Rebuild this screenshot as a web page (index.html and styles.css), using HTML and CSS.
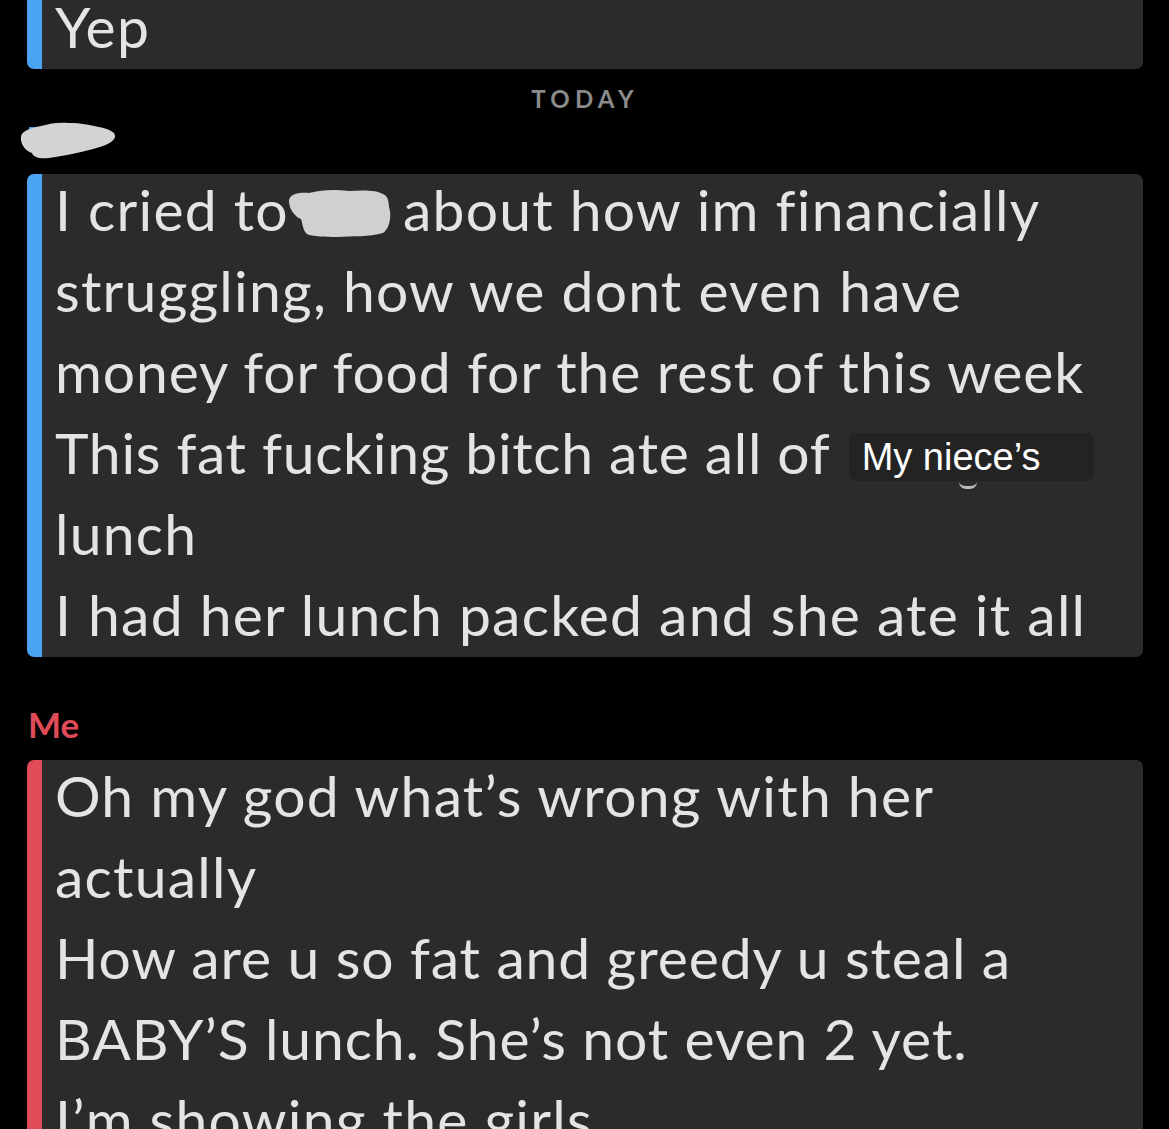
FILE: index.html
```html
<!DOCTYPE html>
<html lang="en">
<head>
  <meta charset="UTF-8">
  <meta name="viewport" content="width=device-width, initial-scale=1.0">
  <title>Chat</title>
  <link rel="stylesheet" href="styles.css">
</head>
<body>
  <div class="chat">
    <div class="bubble them first">
      <p class="msg">Yep</p>
    </div>

    <div class="day">TODAY</div>

    <div class="sender">
      <span class="sender-mark"></span>
      <svg class="blob name-blob" viewBox="0 0 100 38" aria-hidden="true">
        <path d="M4 16 C4 10 14 7 24 5 C34 2 42 1 52 2 C64 2 72 4 82 6 C92 8 99 11 98 16 C97 21 88 25 76 28 C62 32 46 35 32 37 C22 38 16 36 15 32 C8 30 3 22 4 16 Z" fill="#d3d3d3"/>
      </svg>
    </div>

    <div class="bubble them">
      <p class="msg">I cried to<svg class="blob word-blob" viewBox="0 0 104 48" aria-hidden="true"><path d="M2 12 C2 5 12 3 22 4 C34 1 48 0 62 2 C76 1 90 1 96 5 C103 8 101 16 103 22 C104 30 102 40 96 44 C82 48 66 47 50 48 C38 48 26 47 22 46 C16 44 16 36 14 30 C8 28 2 20 2 12 Z" fill="#d0d0d0"/></svg>about how im financially<br>struggling, how we dont even have<br><span class="tight">money for food for the rest of this week</span><br><span class="tighter">This fat fucking bitch ate all of </span><span class="tag">My niece’s<span class="tag-tail"></span></span><br>lunch<br>I had her lunch packed and she ate it all</p>
    </div>

    <div class="sender me">Me</div>

    <div class="bubble mine">
      <p class="msg">Oh my god what’s wrong with her<br>actually<br><span class="tight">How are u so fat and greedy u steal a</span><br><span class="tight">BABY’S lunch. She’s not even 2 yet.</span><br>I’m showing the girls</p>
    </div>
  </div>
</body>
</html>
```

FILE: styles.css
```css
html, body { margin: 0; padding: 0; background: #000; }
body { width: 1169px; height: 1129px; overflow: hidden; font-family: Lato, "Open Sans", sans-serif; }

.chat { padding: 0 26px 0 27px; }

.bubble { display: flow-root; background: #2b2b2b; border-radius: 7px; border-left: 15px solid #4aa3f3; padding: 0 0 0 13px; }
.bubble.mine { border-left-color: #e04b59; }
.bubble.first { margin-top: -14px; height: 83px; }

.msg { margin: 0; color: #e4e4e4; font-size: 57px; font-weight: 400; line-height: 81px; white-space: nowrap; letter-spacing: 1.25px; }
.msg .tight { letter-spacing: 0.9px; }
.msg .tighter { letter-spacing: 0.7px; }
.them:not(.first) .msg { margin-top: -5px; padding-bottom: 2px; }
.mine .msg { margin-top: -5px; }

.day { text-align: center; color: #8a8a8a; font-size: 24px; letter-spacing: 5.2px; font-weight: 700; padding: 15px 0 0; height: 30px; }

.sender { position: relative; height: 60px; }
.sender-mark { position: absolute; left: 2px; top: 13px; width: 8px; height: 6px; background: #4aa3f3; }
.name-blob { position: absolute; left: -10px; top: 7px; width: 100px; height: 38px; }

.blob.word-blob { display: inline-block; width: 104px; height: 48px; vertical-align: -6px; margin: 0 12px 0 -2px; }

.tag { position: relative; display: inline-block; background: #232323; border-radius: 8px; color: #fff; font-family: "Liberation Sans", Arial, sans-serif; font-size: 38px; font-weight: 400; line-height: 48px; padding: 0 54px 0 13px; letter-spacing: 0; vertical-align: 4px; margin-left: 4px; }
.tag-tail { position: absolute; left: 110px; bottom: -8px; width: 18px; height: 4px; border-bottom: 3px solid #bbb; border-radius: 0 0 10px 10px; }

.sender.me { height: auto; color: #e04b59; font-size: 35px; font-weight: 700; padding: 47px 0 16px 1px; line-height: 40px; }
```
